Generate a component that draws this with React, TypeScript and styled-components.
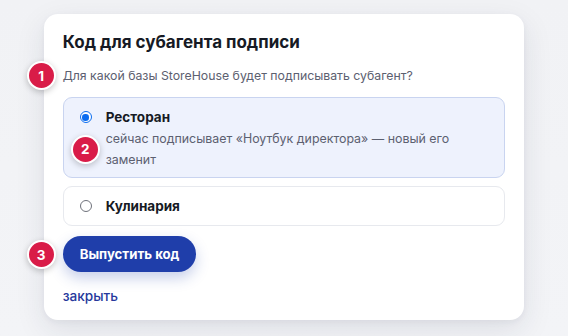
import React, { useState } from "react";
import styled, { createGlobalStyle } from "styled-components";

const Global = createGlobalStyle`
  html, body { margin: 0; padding: 0; }
  body {
    background: #f3f4f7;
    font-family: Inter, "Noto Sans", sans-serif;
    -webkit-font-smoothing: antialiased;
  }
`;

const Page = styled.div`
  width: 568px;
  height: 336px;
  box-sizing: border-box;
  padding: 14px 0 0 44px;
  background: linear-gradient(180deg, #f1f2f5 0%, #f3f4f7 100%);
  overflow: hidden;
`;

const Card = styled.div`
  position: relative;
  width: 480px;
  height: 306px;
  box-sizing: border-box;
  background: #ffffff;
  border-radius: 14px;
  box-shadow: 0 10px 30px rgba(30, 40, 70, 0.10), 0 2px 6px rgba(30, 40, 70, 0.05);
  padding: 16.5px 19px 0 18.7px;
  display: flex;
  flex-direction: column;
`;

const Title = styled.h2`
  margin: 0;
  font-size: 17px;
  font-weight: 700;
  color: #161a24;
  line-height: 22px;
`;

const Question = styled.div`
  position: relative;
  margin-top: 14.5px;
  font-size: 12.3px;
  color: #5c6070;
  line-height: 18px;
`;

const Options = styled.div`
  margin-top: 12.3px;
  display: flex;
  flex-direction: column;
  gap: 7.4px;
`;

const Option = styled.label<{ $active: boolean }>`
  position: relative;
  display: grid;
  grid-template-columns: 12px 1fr;
  column-gap: 14px;
  padding: ${(p) => (p.$active ? "9px 14px 7px 16px" : "9px 14px 9px 16px")};
  border-radius: 9px;
  border: 1px solid ${(p) => (p.$active ? "#c9d4f0" : "#e7e9ee")};
  background: ${(p) => (p.$active ? "#eef2fd" : "#ffffff")};
  cursor: pointer;
`;

const Radio = styled.span<{ $checked: boolean }>`
  width: 12px;
  height: 12px;
  margin-top: 4px;
  box-sizing: border-box;
  border-radius: 50%;
  border: ${(p) => (p.$checked ? "1.5px solid #0a6cf0" : "1px solid #6f727b")};
  background: #fff;
  display: flex;
  align-items: center;
  justify-content: center;
  &::after {
    content: "";
    display: ${(p) => (p.$checked ? "block" : "none")};
    width: 6.5px;
    height: 6.5px;
    border-radius: 50%;
    background: #0a6cf0;
  }
`;

const OptionBody = styled.div`
  display: flex;
  flex-direction: column;
`;

const OptionLabel = styled.div`
  font-size: 13.5px;
  font-weight: 700;
  color: #161a24;
  line-height: 20px;
`;

const OptionHint = styled.div`
  font-size: 12.4px;
  color: #5c6070;
  line-height: 21px;
  margin-top: 1px;
`;

const PrimaryButton = styled.button`
  position: relative;
  align-self: flex-start;
  margin-top: 10.3px;
  height: 36.5px;
  padding: 0 17px;
  border: none;
  border-radius: 18px;
  background: #1f3eaa;
  color: #fff;
  font-family: inherit;
  font-size: 13.2px;
  font-weight: 700;
  box-shadow: 0 6px 14px rgba(31, 62, 170, 0.25);
  cursor: pointer;
`;

const CloseLink = styled.a`
  align-self: flex-start;
  margin-top: 14.2px;
  font-size: 13.6px;
  font-weight: 500;
  color: #26399c;
  line-height: 18px;
  cursor: pointer;
`;

const Badge = styled.span<{ $left: number; $top: number }>`
  position: absolute;
  left: ${(p) => p.$left}px;
  top: ${(p) => p.$top}px;
  width: 29px;
  height: 29px;
  box-sizing: border-box;
  border-radius: 50%;
  background: #d91c48;
  border: 2.5px solid #ffffff;
  box-shadow: 0 2px 6px rgba(0, 0, 0, 0.22);
  color: #fff;
  font-size: 13.5px;
  font-weight: 700;
  display: flex;
  align-items: center;
  justify-content: center;
  z-index: 2;
`;

export default function App() {
  const [value, setValue] = useState("rest");
  return (
    <>
      <Global />
      <Page>
        <Card>
          <Title>Код для субагента подписи</Title>
          <Question>
            <Badge $left={-36} $top={-6}>1</Badge>
            Для какой базы StoreHouse будет подписывать субагент?
          </Question>
          <Options>
            <Option $active={value === "rest"} onClick={() => setValue("rest")}>
              <Radio $checked={value === "rest"} />
              <OptionBody>
                <OptionLabel>Ресторан</OptionLabel>
                <OptionHint>
                  сейчас подписывает «Ноутбук директора» — новый его
                  <br />
                  заменит
                </OptionHint>
              </OptionBody>
              <Badge $left={7} $top={36.5}>2</Badge>
            </Option>
            <Option $active={value === "kul"} onClick={() => setValue("kul")}>
              <Radio $checked={value === "kul"} />
              <OptionBody>
                <OptionLabel>Кулинария</OptionLabel>
              </OptionBody>
            </Option>
          </Options>
          <PrimaryButton>
            <Badge $left={-36} $top={4.5}>3</Badge>
            Выпустить код
          </PrimaryButton>
          <CloseLink>закрыть</CloseLink>
        </Card>
      </Page>
    </>
  );
}
